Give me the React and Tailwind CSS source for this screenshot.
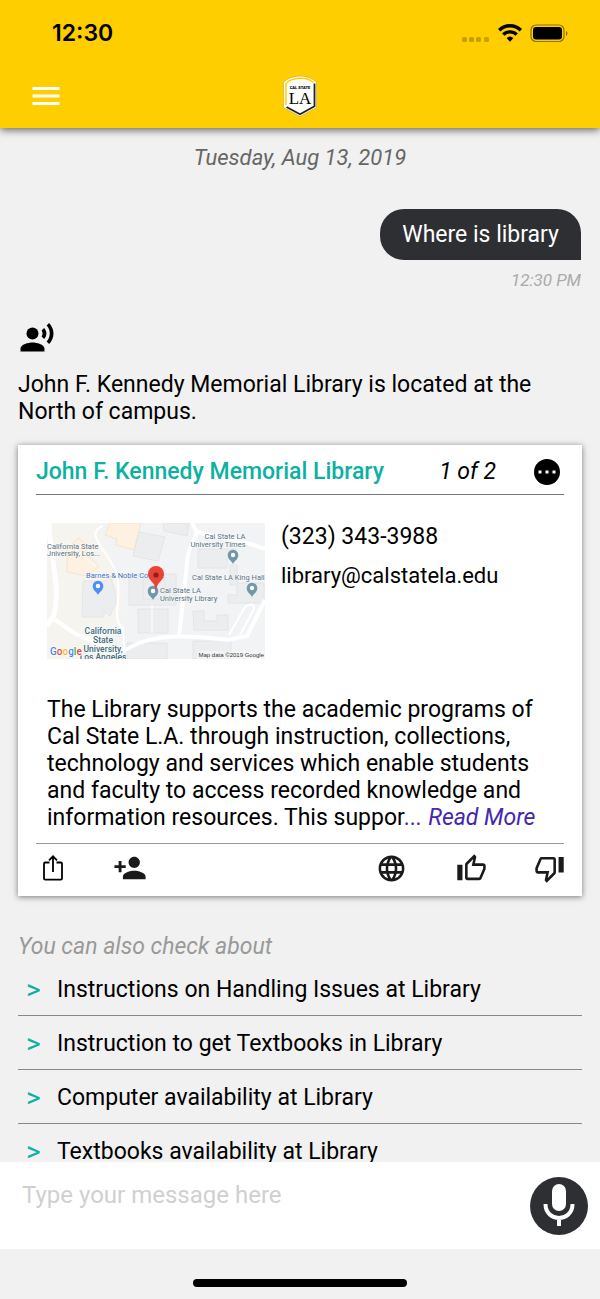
import { MdMenu, MdRecordVoiceOver, MdPersonAdd, MdLanguage } from 'react-icons/md'

const suggestions = [
  'Instructions on Handling Issues at Library',
  'Instruction to get Textbooks in Library',
  'Computer availability at Library',
  'Textbooks availability at Library',
]

function StatusBar() {
  return (
    <div className="h-[66px] pl-[52px] pr-8 flex items-center justify-between">
      <span className="font-['Inter',sans-serif] font-semibold text-[23px]">12:30</span>
      <svg width="106" height="20" viewBox="0 0 106 20">
        <g fill="#000" opacity="0.22">
          <rect x="0" y="14" width="5" height="5" rx="1.5" />
          <rect x="7" y="14" width="5" height="5" rx="1.5" />
          <rect x="14" y="14" width="5" height="5" rx="1.5" />
          <rect x="22" y="14" width="5" height="5" rx="1.5" />
        </g>
        <g fill="none" stroke="#000" strokeWidth="3.4">
          <path d="M37.2 7.2A15.5 15.5 0 0 1 58.8 7.2" />
          <path d="M41.3 11.6A9.6 9.6 0 0 1 54.7 11.6" />
        </g>
        <path d="M44.6 15.1A5 5 0 0 1 51.4 15.1L48 18.8Z" />
        <rect x="69" y="2" width="33" height="16.5" rx="5" fill="none" stroke="#000" strokeOpacity="0.45" strokeWidth="1.2" />
        <rect x="71" y="4" width="29" height="12.5" rx="3" />
        <path d="M104 8v5c1.8-.7 1.8-4.3 0-5Z" opacity="0.5" />
      </svg>
    </div>
  )
}

function Logo() {
  return (
    <svg width="36" height="44" viewBox="0 0 36 44" aria-label="Cal State LA">
      <path d="M1.5 8.500C9 0 27 0 34.500 8.500V33.500L18 42.500L1.500 33.500Z" fill="#fff" stroke="#b99b22" strokeWidth="0.5" />
      <path d="M4 31V9.500C11 2.800 25 2.800 31.500 8.500" fill="none" stroke="#ffce00" strokeWidth="1.500" />
      <path d="M32.500 9.500V32.200L18 40.200L4.500 33" fill="none" stroke="#222" strokeWidth="1.800" />
      <text x="18" y="15" textAnchor="middle" fontSize="4" fontWeight="900" fontFamily="Roboto, sans-serif">CAL STATE</text>
      <text x="18" y="30" textAnchor="middle" fontSize="17" fontFamily="'Liberation Serif', serif">LA</text>
    </svg>
  )
}

function MapPin({ x, y, color }) {
  return (
    <g transform={`translate(${x} ${y})`}>
      <path d="M0 8C-1.500 4.500-5.300 3.500-5.300-1A5.300 5.300 0 0 1 5.300-1C5.300 3.500 1.500 4.500 0 8Z" fill={color} />
      <circle cy="-1" r="2.200" fill="#fff" />
    </g>
  )
}

function CampusMap() {
  return (
    <svg className="w-[218px] h-[136px] shrink-0" viewBox="0 0 218 136" fontFamily="Roboto, sans-serif" role="img" aria-label="Campus map">
      <rect width="218" height="136" fill="#f1f3f5" />
      {/* campus ground */}
      <path d="M0 0H52L66 40L76 70L72 104L76 136H0Z" fill="#f6f4ef" />
      <g fill="#fef1e2" stroke="#f8dfc2" strokeWidth="0.8">
        <path d="M20 27L31 15L42 23L38 29L52 43L40 53L20 49Z" />
        <path d="M63 0H94L87 27L69 22L70 16L58 12Z" />
      </g>
      {/* buildings */}
      <g fill="#ebedee" stroke="#e0e2e3" strokeWidth="0.8">
        <path d="M92 9L118 14L111 38L86 33Z" />
        <path d="M116 0H142L140 13L117 8Z" />
        <path d="M82 51H129V82H82Z" />
        <path d="M96 56H118V76H96Z" />
        <path d="M91 86H121V110H91Z" />
        <path d="M36 58H58L63 52L68 68L69 80L63 93L57 88V94H35Z" />
        <path d="M151 26H189V34H180V45H151Z" />
        <path d="M183 42H190V60H217V80H181V72H190V62H183Z" />
        <path d="M146 88H157V98H170V92H181V107H147Z" />
        <path d="M146 118H184V136H146Z" />
        <path d="M80 120H120V136H80Z" />
      </g>
      <g fill="none" stroke="#fff">
        <path d="M2 0C3 35 14 64 7 92L0 103" strokeWidth="5" />
        <path d="M7 96L27 110L72 130L92 120C112 113 130 113 152 114L181 117L200 113L218 77" strokeWidth="4" />
        <path d="M145 0L150 9L141 31L137 70L132 113" strokeWidth="4" />
        <path d="M150 9C174 15 190 15 218 26" strokeWidth="4" />
        <path d="M56 3C34 10 66 32 70 53C76 79 63 95 76 105L77 125" strokeWidth="2" />
        <path d="M182 112L198 84Q207 78 207 86L193 112" strokeWidth="2" />
        <path d="M21 19L49 44M105 81V110" strokeWidth="1" />
      </g>
      <MapPin x="51" y="64" color="#4d8df5" />
      <MapPin x="106" y="69" color="#6f98a8" />
      <MapPin x="186" y="33" color="#6f98a8" />
      <MapPin x="205" y="66" color="#6f98a8" />
      <g fontSize="7.5" fill="#55717f" stroke="#fff" strokeWidth="1.2" strokeOpacity="0.6" paintOrder="stroke">
        <text x="0" y="26">California State</text>
        <text x="0" y="33">Jniversity, Los...</text>
        <text x="178" y="16" textAnchor="middle">Cal State LA</text>
        <text x="171" y="24" textAnchor="middle">University Times</text>
        <text x="145" y="57">Cal State LA King Hall</text>
        <text x="113" y="70">Cal State LA</text>
        <text x="113" y="78">University Library</text>
        <text x="39" y="55" fill="#3f6fc0">Barnes &amp; Noble College</text>
        <g fontSize="8.5" fontWeight="500" fill="#3c6c7d" textAnchor="middle">
          <text x="56" y="111">California</text>
          <text x="56" y="120">State</text>
          <text x="56" y="129">University,</text>
          <text x="56" y="137">Los Angeles</text>
        </g>
      </g>
      <path d="M109 68C108 58 101 58 101 51A7.800 7.800 0 0 1 117 51C117 58 110 58 109 68Z" fill="#ea4335" />
      <circle cx="109" cy="52" r="2.600" fill="#8c1d18" />
      <text x="3" y="132" fontSize="10" fontWeight="500" stroke="#fff" strokeWidth="1.500" paintOrder="stroke">
        <tspan fill="#4285f4">G</tspan>
        <tspan fill="#ea4335">o</tspan>
        <tspan fill="#fbbc05">o</tspan>
        <tspan fill="#4285f4">g</tspan>
        <tspan fill="#34a853">l</tspan>
        <tspan fill="#ea4335">e</tspan>
      </text>
      <rect x="150" y="128" width="68" height="8" fill="#f5f5f5" opacity="0.7" />
      <text x="217" y="134" textAnchor="end" fontSize="6" fill="#333" fontFamily="'Liberation Sans', sans-serif">Map data ©2019 Google</text>
    </svg>
  )
}

function MoreIcon() {
  return (
    <svg width="26" height="26" viewBox="0 0 26 26">
      <circle cx="13" cy="13" r="13" />
      <path d="M4.500 11.500h3v3h-3zM11.500 11.500h3v3h-3zM18.500 11.500h3v3h-3z" fill="#fff" />
    </svg>
  )
}

function ShareIcon() {
  return (
    <svg width="20" height="26" viewBox="0 0 20 26" fill="none" stroke="#000" strokeWidth="1.800">
      <path d="M6.500 7.500H2.200Q1 7.500 1 8.700V23.500Q1 24.700 2.200 24.700H17.800Q19 24.700 19 23.500V8.700Q19 7.500 17.800 7.500H13.500" />
      <path d="M10 17V1.500M6 5.300L10 1.300L14 5.300" />
    </svg>
  )
}

function ThumbUpIcon() {
  return (
    <svg width="31" height="31" viewBox="0 0 24 24" fill="currentColor">
      <path d="M5,9V21H1V9H5M9,21A2,2 0 0,1 7,19V9C7,8.450 7.220,7.950 7.590,7.590L14.170,1L15.230,2.060C15.500,2.330 15.670,2.700 15.670,3.110L15.640,3.430L14.690,8H21C22.110,8 23,8.900 23,10V12C23,12.260 22.950,12.500 22.860,12.730L19.840,19.780C19.540,20.500 18.830,21 18,21H9M9,19H18.030L21,12V10H12.210L13.340,4.680L9,9.030V19Z" />
    </svg>
  )
}

function ThumbDownIcon() {
  return (
    <svg width="31" height="31" viewBox="0 0 24 24" fill="currentColor">
      <path d="M19,15V3H23V15H19M15,3A2,2 0 0,1 17,5V15C17,15.550 16.780,16.050 16.410,16.410L9.830,23L8.770,21.940C8.500,21.670 8.330,21.300 8.330,20.880L8.360,20.570L9.310,16H3C1.890,16 1,15.100 1,14V12C1,11.740 1.050,11.500 1.140,11.270L4.160,4.220C4.460,3.500 5.170,3 6,3H15M15,5H5.970L3,12V14H11.780L10.650,19.320L15,14.970V5Z" />
    </svg>
  )
}

function MicIcon() {
  return (
    <svg width="58" height="58" viewBox="0 0 58 58">
      <rect x="22" y="7" width="14" height="27" rx="7" fill="#fff" />
      <path d="M15.500 27C15.500 45.500 42.500 45.500 42.500 27M29 40V49" fill="none" stroke="#fff" strokeWidth="4" />
    </svg>
  )
}

function LibraryCard() {
  return (
    <article className="mt-5 px-[18px] bg-white shadow-[0_1px_6px_rgba(0,0,0,0.5)]">
      <header className="h-[50px] pt-1 pr-1 flex items-center border-b border-[#777]">
        <h2 className="flex-1 font-medium text-[#0bb1a2]">John F. Kennedy Memorial Library</h2>
        <span className="italic mr-[38px]">1 of 2</span>
        <button aria-label="More"><MoreIcon /></button>
      </header>

      <div className="pt-7 px-[11px] flex gap-4">
        <CampusMap />
        <div className="space-y-3">
          <p>(323) 343-3988</p>
          <p className="text-[22px]">library@calstatela.edu</p>
        </div>
      </div>

      <p className="mt-[37px] ml-[11px] pb-3">
        The Library supports the academic programs of Cal State L.A. through instruction, collections, technology and
        services which enable students and faculty to access recorded knowledge and information resources. This suppor
        <a href="#more" className="text-[#4527b0] italic">... Read More</a>
      </p>

      <footer className="h-[53px] pb-1 flex items-center border-t border-[#999] text-[#1a1a1a]">
        <button aria-label="Share" className="ml-[7px]"><ShareIcon /></button>
        <button aria-label="Add contact" className="ml-[50px]"><MdPersonAdd size={34} /></button>
        <button aria-label="Website" className="ml-auto"><MdLanguage size={31} /></button>
        <button aria-label="Like" className="ml-[49px]"><ThumbUpIcon /></button>
        <button aria-label="Dislike" className="ml-[47px] -mr-px"><ThumbDownIcon /></button>
      </footer>
    </article>
  )
}

export default function App() {
  return (
    <div className="h-screen flex flex-col bg-[#f1f1f1] text-black text-[23px] leading-[27px] font-['Roboto',sans-serif]">
      <header className="relative shrink-0 bg-[#ffce00] shadow-[0_2px_8px_rgba(0,0,0,0.6)]">
        <StatusBar />
        <div className="h-[62px] px-7 pb-0.5 grid grid-cols-3 items-center">
          <button aria-label="Menu" className="justify-self-start text-white"><MdMenu size={36} /></button>
          <div className="justify-self-center"><Logo /></div>
        </div>
      </header>

      <main className="flex-1 min-h-0 overflow-hidden px-[18px] pt-4">
        <p className="text-center italic text-[22px] text-[#666]">Tuesday, Aug 13, 2019</p>

        {/* User message */}
        <div className="mt-[38px] pr-px flex flex-col items-end">
          <p className="px-[22px] py-3 rounded-3xl rounded-br-none bg-[#2e2f33] text-white">Where is library</p>
          <time className="mt-[7px] italic text-[17px] text-[#aaa]">12:30 PM</time>
        </div>

        {/* Bot answer */}
        <button aria-label="Read aloud" className="mt-[26px] ml-px block"><MdRecordVoiceOver size={36} /></button>
        <p className="mt-[15px]">John F. Kennedy Memorial Library is located at the North of campus.</p>
        <LibraryCard />

        <h3 className="mt-[37px] italic text-[#999]">You can also check about</h3>
        <ul className="mt-[2px]">
          {suggestions.map((text) => (
            <li key={text} className="border-b border-[#888]">
              <button className="w-full h-[53px] pl-2 pb-3 flex items-end text-left">
                <span className="w-[31px] text-[28px] text-[#0bb1a2]">&gt;</span>
                <span>{text}</span>
              </button>
            </li>
          ))}
        </ul>
      </main>

      <form className="shrink-0 h-[87px] pl-[22px] pr-3 flex items-center bg-white">
        <input
          aria-label="Message"
          placeholder="Type your message here"
          className="flex-1 min-w-0 pb-5 text-[24px] outline-none placeholder:text-[#d0d0d0]"
        />
        <button type="button" aria-label="Speak" className="rounded-full bg-[#2e2f33]"><MicIcon /></button>
      </form>

      <div className="shrink-0 h-[50px] pb-3 flex items-end justify-center">
        <div className="w-[214px] h-2 rounded-full bg-black" />
      </div>
    </div>
  )
}
